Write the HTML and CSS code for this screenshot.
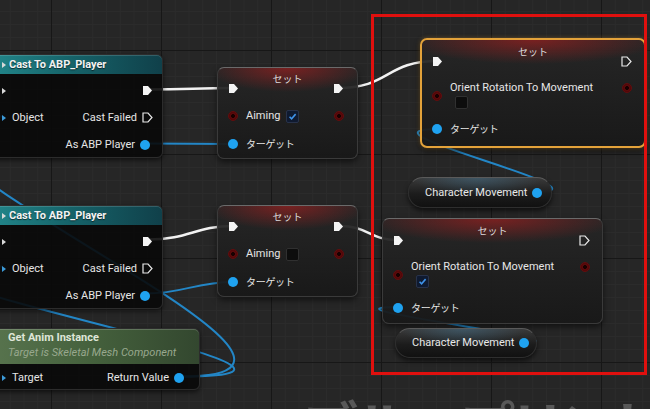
FILE: index.html
```html
<!DOCTYPE html>
<html lang="ja">
<head>
    <meta charset="UTF-8">
    <title>Blueprint Graph</title>
    <link rel="stylesheet" href="styles.css">
</head>
<body>
    <div class="graph">
        <div class="watermark">ブループリント</div>

        <!-- wires sit under the nodes -->
        <svg class="wires" width="650" height="409" viewBox="0 0 650 409">
            <g class="exec-wire">
                <path d="M148 89.5 C190 89.5 195 88 233 88"/>
                <path d="M338 88 C390 88 385 61 438 61"/>
                <path d="M148 239.5 C190 239.5 195 226 233 226"/>
                <path d="M338 226 C370 226 368 240 398 240"/>
            </g>
            <g class="data-wire">
                <path d="M145 143.5 C185 143.5 195 144 233 144"/>
                <path d="M145 293.5 C185 293.5 195 282 233 282"/>
                <path d="M531 192.5 C631 192.5 339 129 439 129"/>
                <path d="M516 343 C616 343 299 307 399 307"/>
                <path d="M182 376.5 C420 376.5 -247 116.5 3 116.5"/>
                <path d="M182 376.5 C420 376.5 -247 266.5 3 266.5"/>
            </g>
        </svg>

        <!-- Cast To ABP_Player (top) -->
        <div class="node cast cast-top">
            <div class="cast-head"><span class="stub"></span>Cast To ABP_Player</div>
            <div class="cast-row">
                <span class="stub"></span>
                <span class="right"><svg class="exec" viewBox="0 0 11 11"><path d="M1 1H6L10 5.5L6 10H1Z"/></svg></span>
            </div>
            <div class="cast-row">
                <span class="stub obj"></span><span class="lbl">Object</span>
                <span class="right"><span class="lbl">Cast Failed</span><svg class="exec open" viewBox="0 0 11 11"><path d="M1 1H6L10 5.5L6 10H1Z"/></svg></span>
            </div>
            <div class="cast-row">
                <span class="right"><span class="lbl">As ABP Player</span><span class="pin blue"></span></span>
            </div>
        </div>

        <!-- Cast To ABP_Player (bottom) -->
        <div class="node cast cast-bot">
            <div class="cast-head"><span class="stub"></span>Cast To ABP_Player</div>
            <div class="cast-row">
                <span class="stub"></span>
                <span class="right"><svg class="exec" viewBox="0 0 11 11"><path d="M1 1H6L10 5.5L6 10H1Z"/></svg></span>
            </div>
            <div class="cast-row">
                <span class="stub obj"></span><span class="lbl">Object</span>
                <span class="right"><span class="lbl">Cast Failed</span><svg class="exec open" viewBox="0 0 11 11"><path d="M1 1H6L10 5.5L6 10H1Z"/></svg></span>
            </div>
            <div class="cast-row">
                <span class="right"><span class="lbl">As ABP Player</span><span class="pin blue"></span></span>
            </div>
        </div>

        <!-- Get Anim Instance -->
        <div class="node cast func">
            <div class="func-head">
                <div class="func-title">Get Anim Instance</div>
                <div class="func-sub">Target is Skeletal Mesh Component</div>
            </div>
            <div class="cast-row">
                <span class="stub obj"></span><span class="lbl">Target</span>
                <span class="right"><span class="lbl">Return Value</span><span class="pin blue"></span></span>
            </div>
        </div>

        <!-- Set Aiming (checked) -->
        <div class="node set aim-top">
            <div class="set-title">セット</div>
            <div class="set-row first">
                <svg class="exec" viewBox="0 0 11 11"><path d="M1 1H6L10 5.5L6 10H1Z"/></svg>
                <svg class="exec end" viewBox="0 0 11 11"><path d="M1 1H6L10 5.5L6 10H1Z"/></svg>
            </div>
            <div class="set-row">
                <span class="pin red"></span><span class="lbl">Aiming</span>
                <span class="check on"><svg viewBox="0 0 12 12"><path d="M2.8 6.3L5 8.5L9.4 3.4"/></svg></span>
                <span class="pin red end"></span>
            </div>
            <div class="set-row">
                <span class="pin blue"></span><span class="lbl jp">ターゲット</span>
            </div>
        </div>

        <!-- Set Aiming (unchecked) -->
        <div class="node set aim-bot">
            <div class="set-title">セット</div>
            <div class="set-row first">
                <svg class="exec" viewBox="0 0 11 11"><path d="M1 1H6L10 5.5L6 10H1Z"/></svg>
                <svg class="exec end" viewBox="0 0 11 11"><path d="M1 1H6L10 5.5L6 10H1Z"/></svg>
            </div>
            <div class="set-row">
                <span class="pin red"></span><span class="lbl">Aiming</span>
                <span class="check"></span>
                <span class="pin red end"></span>
            </div>
            <div class="set-row">
                <span class="pin blue"></span><span class="lbl jp">ターゲット</span>
            </div>
        </div>

        <!-- Set Orient Rotation To Movement (selected, unchecked) -->
        <div class="node set prop prop-top selected">
            <div class="set-title">セット</div>
            <div class="set-row exec-row">
                <svg class="exec" viewBox="0 0 11 11"><path d="M1 1H6L10 5.5L6 10H1Z"/></svg>
                <svg class="exec open end" viewBox="0 0 11 11"><path d="M1 1H6L10 5.5L6 10H1Z"/></svg>
            </div>
            <div class="prop-row">
                <span class="pin red in"></span>
                <div class="prop-body">
                    <div class="lbl">Orient Rotation To Movement</div>
                    <span class="check"></span>
                </div>
                <span class="pin red out"></span>
            </div>
            <div class="set-row target-row">
                <span class="pin blue"></span><span class="lbl jp">ターゲット</span>
            </div>
        </div>

        <!-- Set Orient Rotation To Movement (checked) -->
        <div class="node set prop prop-bot">
            <div class="set-title">セット</div>
            <div class="set-row exec-row">
                <svg class="exec" viewBox="0 0 11 11"><path d="M1 1H6L10 5.5L6 10H1Z"/></svg>
                <svg class="exec open end" viewBox="0 0 11 11"><path d="M1 1H6L10 5.5L6 10H1Z"/></svg>
            </div>
            <div class="prop-row">
                <span class="pin red in"></span>
                <div class="prop-body">
                    <div class="lbl">Orient Rotation To Movement</div>
                    <span class="check on"><svg viewBox="0 0 12 12"><path d="M2.8 6.3L5 8.5L9.4 3.4"/></svg></span>
                </div>
                <span class="pin red out"></span>
            </div>
            <div class="set-row target-row">
                <span class="pin blue"></span><span class="lbl jp">ターゲット</span>
            </div>
        </div>

        <!-- Character Movement getters -->
        <div class="node pill pill-top"><span class="lbl">Character Movement</span><span class="pin blue"></span></div>
        <div class="node pill pill-bot"><span class="lbl">Character Movement</span><span class="pin blue"></span></div>

        <div class="highlight"></div>
    </div>
</body>
</html>
```

FILE: styles.css
```css
body {
    margin: 0;
    background-color: #262626;
    font-family: Roboto, "Noto Sans CJK JP", sans-serif;
}

.graph {
    position: relative;
    width: 650px;
    height: 409px;
    overflow: hidden;
    background-color: #262626;
    background-image:
        linear-gradient(90deg, #171717 1px, transparent 1px),
        linear-gradient(#171717 1px, transparent 1px),
        linear-gradient(90deg, #2b2b2b 1px, transparent 1px),
        linear-gradient(#2b2b2b 1px, transparent 1px);
    background-size: 110px 104px, 110px 104px, 13.75px 13px, 13.75px 13px;
    background-position: 51px 50px;
}

/* big corner label of the graph editor, clipped by the window edge */
.watermark {
    position: absolute;
    left: 304px;
    top: 396px;
    font-family: "Noto Sans CJK JP", sans-serif;
    font-weight: bold;
    font-size: 56px;
    line-height: 1;
    color: #585858;
    white-space: nowrap;
    font-feature-settings: "palt";
}

.wires {
    position: absolute;
    left: 0;
    top: 0;
}
.wires path {
    fill: none;
}
.exec-wire path {
    stroke: #f2f2f2;
    stroke-width: 2.5;
}
.data-wire path {
    stroke: #2386c6;
    stroke-width: 2;
}

.highlight {
    position: absolute;
    left: 371px;
    top: 14px;
    width: 276px;
    height: 361px;
    box-sizing: border-box;
    border: 3px solid #e0100e;
}

/* ---------- shared node bits ---------- */
.node {
    position: absolute;
    box-sizing: border-box;
    color: #e6e6e6;
    font-size: 11px;
}
.lbl {
    white-space: nowrap;
    line-height: 14px;
}
.jp {
    font-family: "Noto Sans CJK JP", sans-serif;
    font-size: 10px;
    letter-spacing: -0.3px;
}
.exec {
    width: 11px;
    height: 11px;
    flex: none;
}
.exec path {
    fill: #f4f4f4;
}
.exec.open path {
    fill: none;
    stroke: #eaeaea;
    stroke-width: 1.2;
}
.pin {
    width: 10px;
    height: 10px;
    border-radius: 50%;
    flex: none;
    box-sizing: border-box;
}
.pin.blue {
    background-color: #1fa2f0;
}
.pin.red {
    background: radial-gradient(circle, #170101 28%, #5e0a0b 40%, #3d0506 100%);
    border: 1px solid #640c0d;
}
.end {
    margin-left: auto;
}
.check {
    width: 13px;
    height: 13px;
    box-sizing: border-box;
    border: 1px solid #303030;
    border-radius: 2px;
    background-color: #0d0d0d;
    flex: none;
    display: block;
}
.check.on {
    background-color: #0f1a30;
    border-color: #28324a;
}
.check svg {
    display: block;
    width: 11px;
    height: 11px;
}
.check svg path {
    fill: none;
    stroke: #3f93ea;
    stroke-width: 1.7;
}

/* ---------- cast / function nodes ---------- */
.cast {
    width: 173px;
    left: -10px;
    background-color: rgba(9, 9, 9, 0.9);
    border: 1px solid #2c2c2c;
    border-radius: 6px;
    box-shadow: 0 2px 5px rgba(0, 0, 0, 0.6);
}
.cast-top {
    top: 54px;
    height: 104px;
}
.cast-bot {
    top: 205px;
    height: 104px;
}
.cast-head {
    height: 19px;
    display: flex;
    align-items: center;
    gap: 3px;
    padding-left: 11px;
    margin-bottom: 3px;
    border-radius: 5px 5px 0 0;
    background: linear-gradient(90deg, #22868a 0%, #16646a 45%, #10404a 100%);
    box-shadow: inset 0 1px 0 rgba(255, 255, 255, 0.15);
    font-weight: bold;
    color: #f2f2f2;
    text-shadow: 0 1px 1px rgba(0, 0, 0, 0.6);
}
.stub {
    width: 0;
    height: 0;
    border-style: solid;
    border-width: 3px 0 3px 4px;
    border-color: transparent transparent transparent #d8d8d8;
    flex: none;
}
.stub.obj {
    border-left-color: #3c9ad8;
}
.cast-row {
    height: 27px;
    display: flex;
    align-items: center;
    gap: 6px;
    padding: 0 9px 0 11px;
}
.right {
    margin-left: auto;
    display: flex;
    align-items: center;
    gap: 5px;
}
.cast .pin.blue {
    margin-right: 3px;
}

.func {
    top: 328px;
    width: 210px;
    height: 62px;
}
.func .cast-row {
    padding-right: 12px;
}
.func-head {
    height: 35px;
    box-sizing: border-box;
    padding: 2px 0 0 17px;
    border-radius: 5px 5px 0 0;
    background: linear-gradient(90deg, #58744e 0%, #44603c 50%, #33472f 100%);
    box-shadow: inset 0 1px 0 rgba(255, 255, 255, 0.18);
}
.func-title {
    font-weight: bold;
    line-height: 14px;
    color: #dfe6d8;
}
.func-sub {
    font-style: italic;
    line-height: 15px;
    color: #98a88e;
}

/* ---------- variable set nodes ---------- */
.set {
    width: 141px;
    padding-top: 4px;
    border: 1px solid #3a3a3a;
    border-top-color: #6a6a6a;
    border-radius: 7px;
    background:
        radial-gradient(ellipse 58% 24px at 50% 0, rgba(165, 30, 30, 0.65), rgba(120, 20, 20, 0)),
        linear-gradient(rgba(38, 38, 38, 0.94), rgba(24, 24, 24, 0.94));
    box-shadow: 0 3px 6px rgba(0, 0, 0, 0.55);
}
.aim-top {
    left: 217px;
    top: 67px;
}
.aim-bot {
    left: 217px;
    top: 205px;
}
.set-title {
    text-align: center;
    line-height: 14px;
    font-family: "Noto Sans CJK JP", sans-serif;
    font-size: 10px;
    color: #dddddd;
}
.set-row {
    height: 28px;
    display: flex;
    align-items: center;
    gap: 8px;
    padding: 0 13px 0 10px;
}
.set-row.first {
    margin-top: -12px;
}
.set-row .check {
    margin-left: -2px;
}

.prop {
    padding-top: 5px;
    padding-bottom: 7px;
}
.prop-top {
    left: 420px;
    top: 38px;
    width: 226px;
    padding-bottom: 9px;
    border: 2px solid #e3a23a;
    box-shadow: 0 0 4px rgba(230, 160, 50, 0.35), 0 3px 6px rgba(0, 0, 0, 0.55);
}
.prop-bot {
    left: 382px;
    top: 218px;
    width: 221px;
}
.prop .set-row {
    height: 16px;
    padding-right: 12px;
}
.prop .exec-row {
    margin-top: -6px;
}
.prop .target-row {
    margin-top: 12px;
}
.prop-row {
    display: flex;
    align-items: flex-start;
    gap: 8px;
    margin-top: 12px;
    padding: 0 12px 0 10px;
}
.prop-row .in {
    margin-top: 10px;
}
.prop-row .out {
    margin-top: 2px;
    margin-left: auto;
}
.prop-body .check {
    margin-left: 5px;
    margin-top: 1px;
}

/* ---------- compact getter nodes ---------- */
.pill {
    height: 31px;
    display: flex;
    align-items: center;
    gap: 5px;
    padding-left: 16px;
    border: 1px solid #2e2e2e;
    border-top-color: #5a5a5a;
    border-radius: 15px;
    background:
        radial-gradient(ellipse 45% 60% at 48% 0, rgba(70, 120, 150, 0.45), rgba(70, 120, 150, 0)),
        linear-gradient(#3a3a3a, #1c1c1c 55%, #111111);
    box-shadow: 0 3px 5px rgba(0, 0, 0, 0.6);
    color: #e8e8e8;
}
.pill-top {
    left: 408px;
    top: 177px;
    width: 144px;
}
.pill-bot {
    left: 395px;
    top: 328px;
    width: 142px;
    height: 30px;
}
```
